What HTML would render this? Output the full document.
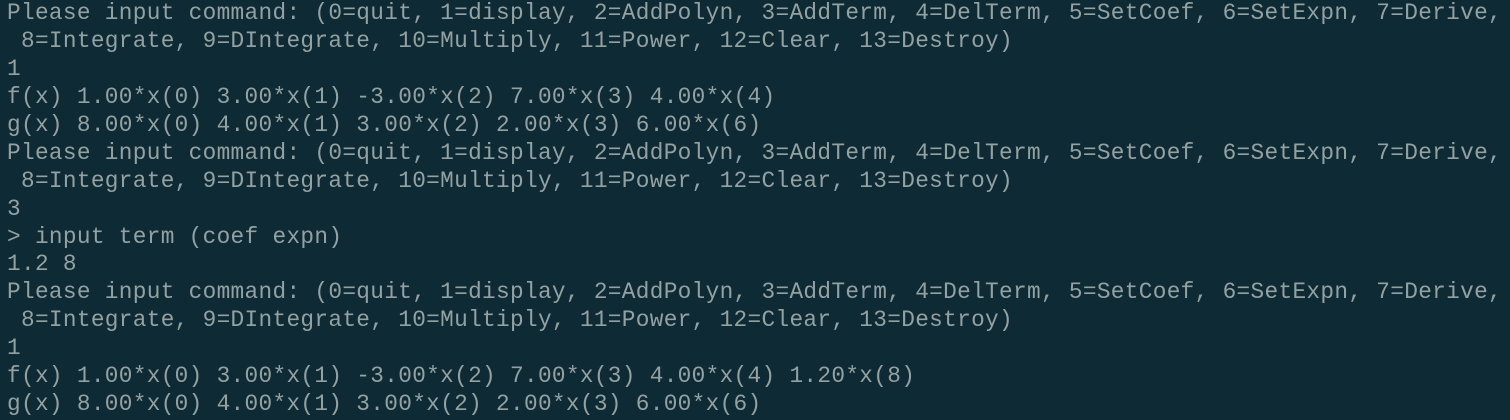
<!DOCTYPE html>
<html><head><meta charset="utf-8"><style>
html,body{margin:0;padding:0;background:#0e2a35;width:1510px;height:420px;overflow:hidden}
pre{margin:0;padding:0 0 0 7px;font-family:"Liberation Mono",monospace;font-size:22.75px;letter-spacing:0.32px;line-height:27.93px;color:#93a1a1;white-space:pre}
</style></head><body><pre>Please input command: (0=quit, 1=display, 2=AddPolyn, 3=AddTerm, 4=DelTerm, 5=SetCoef, 6=SetExpn, 7=Derive,
 8=Integrate, 9=DIntegrate, 10=Multiply, 11=Power, 12=Clear, 13=Destroy)
1
f(x) 1.00*x(0) 3.00*x(1) -3.00*x(2) 7.00*x(3) 4.00*x(4)
g(x) 8.00*x(0) 4.00*x(1) 3.00*x(2) 2.00*x(3) 6.00*x(6)
Please input command: (0=quit, 1=display, 2=AddPolyn, 3=AddTerm, 4=DelTerm, 5=SetCoef, 6=SetExpn, 7=Derive,
 8=Integrate, 9=DIntegrate, 10=Multiply, 11=Power, 12=Clear, 13=Destroy)
3
&gt; input term (coef expn)
1.2 8
Please input command: (0=quit, 1=display, 2=AddPolyn, 3=AddTerm, 4=DelTerm, 5=SetCoef, 6=SetExpn, 7=Derive,
 8=Integrate, 9=DIntegrate, 10=Multiply, 11=Power, 12=Clear, 13=Destroy)
1
f(x) 1.00*x(0) 3.00*x(1) -3.00*x(2) 7.00*x(3) 4.00*x(4) 1.20*x(8)
g(x) 8.00*x(0) 4.00*x(1) 3.00*x(2) 2.00*x(3) 6.00*x(6)</pre></body></html>
